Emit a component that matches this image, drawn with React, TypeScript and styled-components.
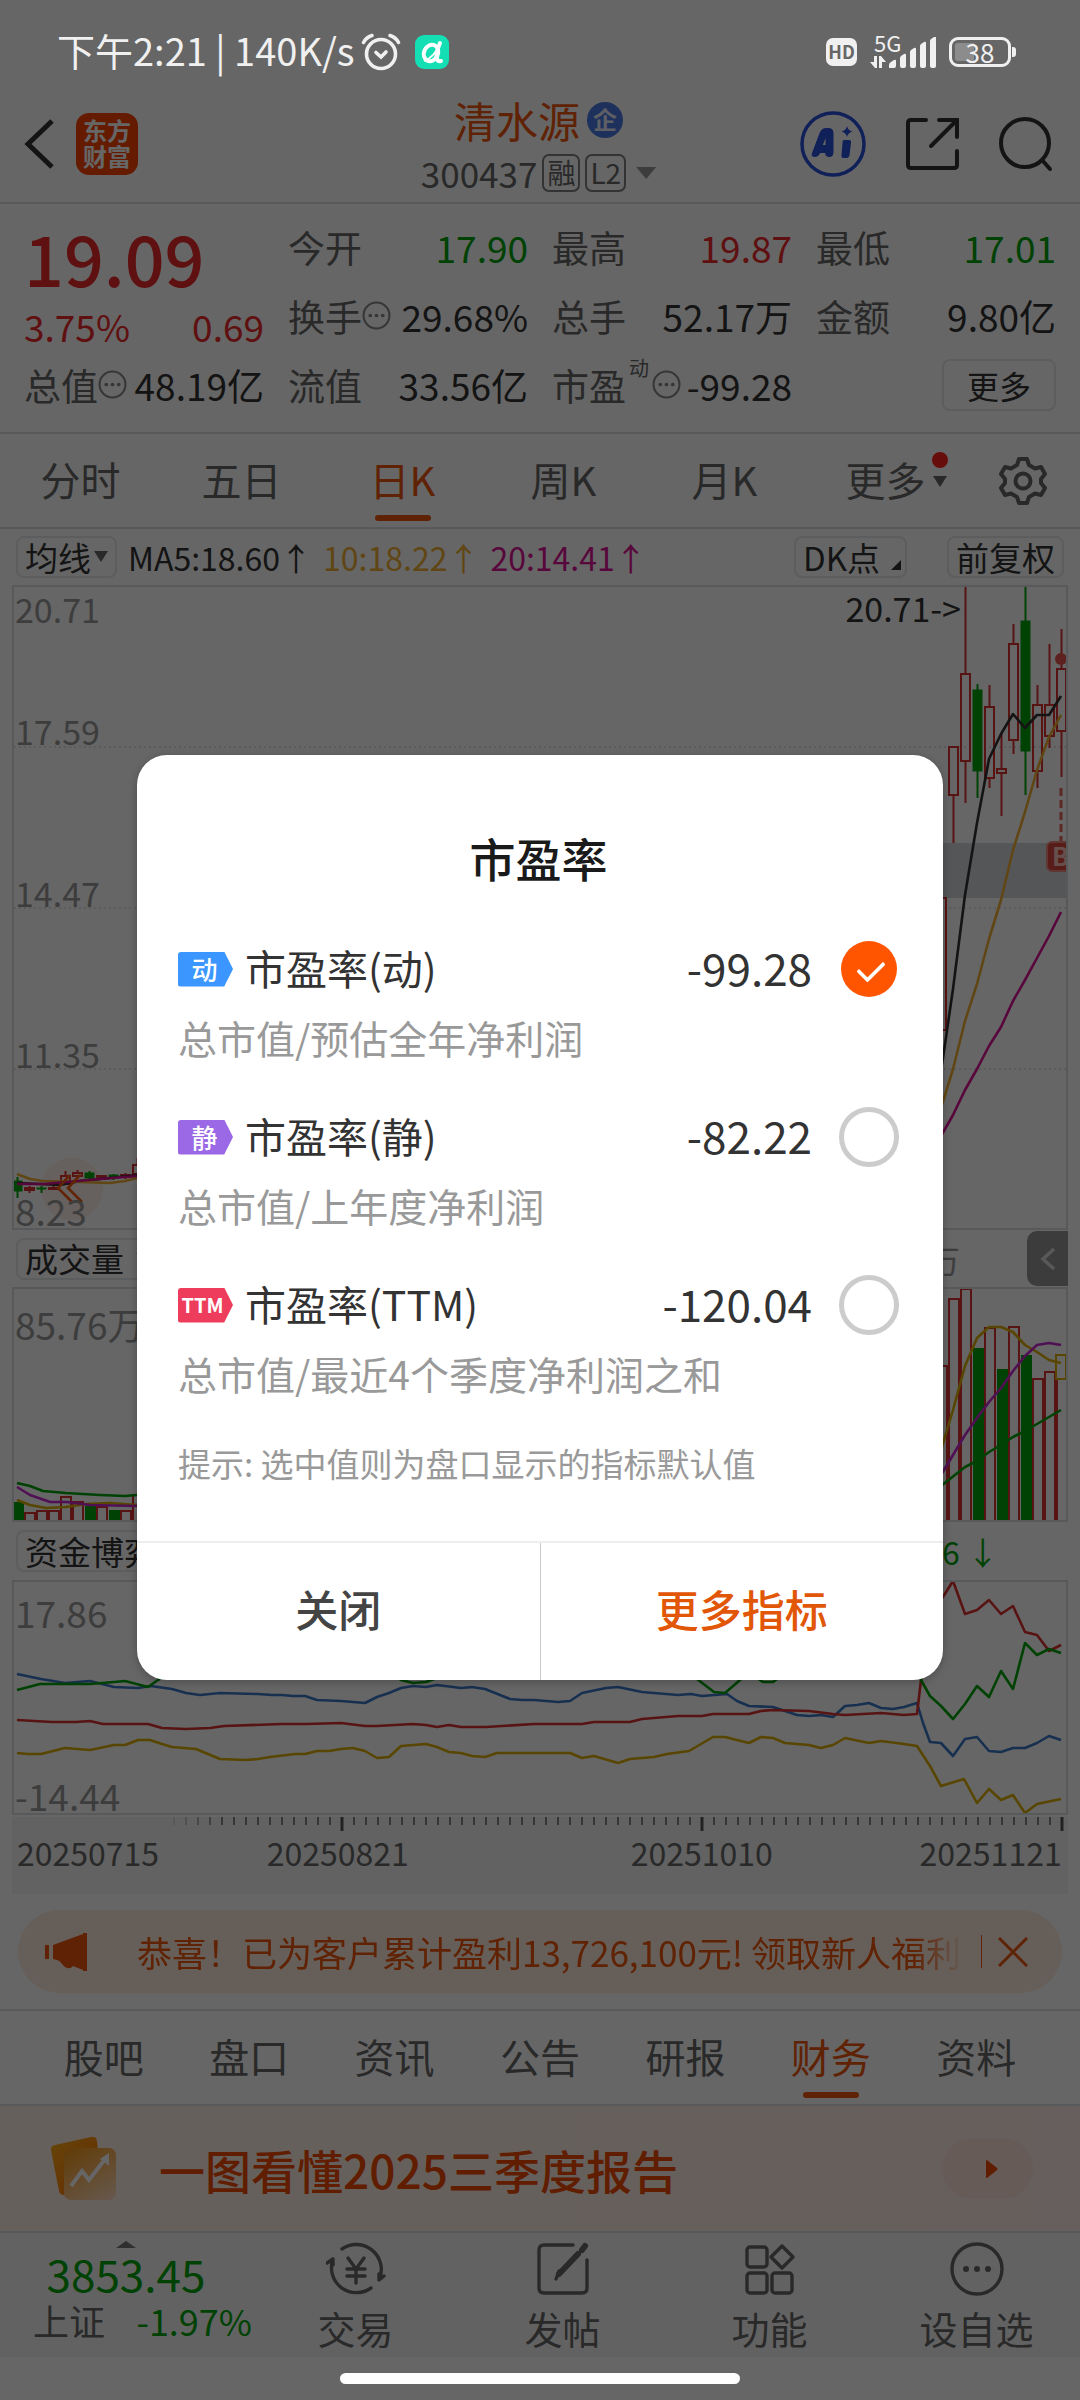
import React, { useState } from 'react';
import styled, { createGlobalStyle, css } from 'styled-components';

const color = {
  up: '#ee2a2a',
  down: '#00a50a',
  brand: '#f0560a',
  ink: '#333333',
  label: '#666666',
  muted: '#999999',
  line: '#dcdfe3',
  frame: '#e6e8ec',
  candle: '#dc3030',
  gold: '#f0b033',
  magenta: '#dc1296',
  purple: '#c828d2',
  blue: '#3c78c8',
  yellow: '#dcae00',
};

const GlobalStyle = createGlobalStyle`
  * { box-sizing: border-box; }
  body {
    margin: 0;
    background: #fff;
    font-family: "Noto Sans CJK SC", "Noto Sans", sans-serif;
    color: ${color.ink};
  }
  button, input {
    font: inherit;
    color: inherit;
    margin: 0;
    padding: 0;
    border: 0;
    background: none;
  }
  svg { display: block; flex: none; }
`;

const Screen = styled.div`
  position: relative;
  min-height: 100vh;
  display: flex;
  flex-direction: column;
  background: #fff;
  overflow: hidden;
`;

/* ---------- status bar ---------- */

const StatusBar = styled.div`
  position: relative;
  z-index: 3;
  display: flex;
  align-items: center;
  justify-content: space-between;
  height: 96px;
  padding: 8px 69px 0 57px;
  color: #f0f0f0;
  font-size: 38px;
  line-height: 48px;
`;

const StatusGroup = styled.div<{ $gap: number }>`
  display: flex;
  align-items: center;
  gap: ${(p) => p.$gap}px;
`;

const StatusTime = styled.span`
  margin: -4px -8px 0 0;
`;

const HdBadge = styled.span`
  width: 31px;
  height: 28px;
  border-radius: 7px;
  background: #f0f0f0;
  color: #666;
  font-size: 18px;
  font-weight: 700;
  line-height: 27px;
  text-align: center;
`;

const Network = styled.div`
  position: relative;
`;

const NetworkType = styled.span`
  position: absolute;
  left: 4px;
  top: -6px;
  font-size: 22px;
  line-height: 22px;
`;

const Battery = styled.span`
  position: relative;
  width: 62px;
  height: 30px;
  border: 3px solid #f0f0f0;
  border-radius: 9px;
  background: linear-gradient(90deg, #8c8c8c 38%, transparent 38%);
  background-origin: content-box;
  background-clip: content-box;
  padding: 3px;
  font-size: 26px;
  line-height: 17px;
  text-align: center;
  &::after {
    content: '';
    position: absolute;
    right: -8px;
    top: 7px;
    width: 4px;
    height: 10px;
    border-radius: 0 3px 3px 0;
    background: #f0f0f0;
  }
`;

/* ---------- header ---------- */

const Header = styled.header`
  display: grid;
  grid-template-columns: 1fr auto 1fr;
  align-items: center;
  height: 108px;
  padding: 0 27px 15px 24px;
  border-bottom: 2px solid ${color.line};
`;

const HeaderSide = styled.div<{ $end?: boolean; $gap: number }>`
  display: flex;
  align-items: center;
  gap: ${(p) => p.$gap}px;
  justify-content: ${(p) => (p.$end ? 'flex-end' : 'flex-start')};
`;

const IconButton = styled.button`
  display: flex;
  cursor: pointer;
`;

const Logo = styled.a`
  display: block;
  width: 62px;
  height: 62px;
  padding-top: 4px;
  border-radius: 13px;
  background: #fa4400;
  color: #fff;
  font-size: 24px;
  font-weight: 700;
  line-height: 26px;
  text-align: center;
  text-decoration: none;
`;

const StockTitle = styled.h1`
  display: flex;
  align-items: center;
  justify-content: center;
  gap: 7px;
  margin: 0 0 10px;
  color: ${color.brand};
  font-size: 42px;
  font-weight: 400;
  line-height: 48px;
`;

const CompanyBadge = styled.span`
  width: 36px;
  height: 36px;
  border-radius: 50%;
  background: #4b7be5;
  color: #e8eefc;
  font-size: 24px;
  font-weight: 700;
  line-height: 34px;
  text-align: center;
`;

const StockCode = styled.div`
  display: flex;
  align-items: center;
  justify-content: center;
  gap: 5px;
  color: ${color.label};
  font-size: 35px;
  line-height: 38px;
`;

const CodeTag = styled.span`
  height: 38px;
  min-width: 36px;
  padding: 0 3px;
  border: 2px solid #808080;
  border-radius: 7px;
  font-size: 28px;
  line-height: 32px;
  text-align: center;
`;

const Triangle = styled.span<{ $w: number; $h: number; $fill: string; $up?: boolean }>`
  flex: none;
  width: ${(p) => p.$w}px;
  height: ${(p) => p.$h}px;
  background: ${(p) => p.$fill};
  clip-path: ${(p) => (p.$up ? 'polygon(50% 0, 100% 100%, 0 100%)' : 'polygon(0 0, 100% 0, 50% 100%)')};
`;

const CodeArrow = styled(Triangle)`
  margin-left: 5px;
`;

/* ---------- quote ---------- */

const Quote = styled.section`
  display: grid;
  grid-template-columns: repeat(4, minmax(0, 1fr));
  grid-template-rows: repeat(3, 69px);
  column-gap: 24px;
  padding: 8px 24px 13px;
  border-bottom: 2px solid ${color.line};
  font-size: 37px;
  line-height: 48px;
`;

const PriceBlock = styled.div`
  grid-row: span 2;
  color: ${color.up};
`;

const Price = styled.div`
  font-size: 70px;
  font-weight: 500;
  line-height: 90px;
`;

const Spread = styled.div`
  display: flex;
  justify-content: space-between;
`;

const Cell = styled.div`
  display: flex;
  align-items: center;
  color: ${color.label};
  white-space: nowrap;
`;

const CellValue = styled.span<{ $color?: string }>`
  margin-left: auto;
  color: ${(p) => p.$color ?? color.ink};
`;

const CellNote = styled.sup`
  align-self: flex-start;
  margin: 8px 3px 0;
  font-size: 20px;
  line-height: 20px;
`;

const OutlineButton = styled.button`
  margin-left: auto;
  width: 114px;
  height: 52px;
  border: 2px solid ${color.frame};
  border-radius: 8px;
  color: ${color.ink};
  font-size: 32px;
  line-height: 44px;
  cursor: pointer;
`;

/* ---------- tabs ---------- */

const TabBar = styled.nav<{ $inset: number }>`
  display: flex;
  height: 95px;
  padding: 0 ${(p) => p.$inset}px;
  border-bottom: 2px solid ${color.line};
`;

const Tab = styled.button<{ $active?: boolean }>`
  position: relative;
  flex: 1;
  padding-bottom: 4px;
  color: ${(p) => (p.$active ? color.brand : color.label)};
  font-size: 40px;
  line-height: 56px;
  cursor: pointer;
  ${(p) =>
    p.$active &&
    css`
      &::after {
        content: '';
        position: absolute;
        left: 50%;
        bottom: 6px;
        width: 56px;
        height: 6px;
        margin-left: -28px;
        border-radius: 3px;
        background: ${color.brand};
      }
    `}
`;

const TabMarks = styled.span`
  position: absolute;
  right: 18px;
  top: 18px;
  display: flex;
  flex-direction: column;
  align-items: center;
  gap: 8px;
`;

const RedDot = styled.i`
  width: 16px;
  height: 16px;
  border-radius: 50%;
  background: #ff2020;
`;

const SettingsButton = styled(IconButton)`
  flex: none;
  width: 114px;
  align-items: center;
  justify-content: center;
`;

/* ---------- chart panel ---------- */

const IndicatorRow = styled.div<{ $h: number }>`
  display: flex;
  align-items: center;
  gap: 11px;
  height: ${(p) => p.$h}px;
  padding: 0 16px;
  font-size: 32px;
  line-height: 38px;
  white-space: nowrap;
`;

const Chip = styled.button<{ $gap?: number }>`
  display: flex;
  align-items: center;
  gap: ${(p) => p.$gap ?? 3}px;
  height: 42px;
  padding: 0 7px 1px;
  border: 2px solid ${color.frame};
  border-radius: 8px;
  color: ${color.ink};
  font-size: 33px;
  line-height: 36px;
  cursor: pointer;
`;

const ChipGroup = styled.div`
  display: flex;
  gap: 40px;
  margin-left: auto;
`;

const Corner = styled.i`
  align-self: flex-end;
  width: 10px;
  height: 10px;
  margin: 0 -3px 5px 8px;
  background: ${color.ink};
  clip-path: polygon(100% 0, 100% 100%, 0 100%);
`;

const Tinted = styled.span<{ $color: string }>`
  color: ${(p) => p.$color};
`;

const CutOff = styled.div<{ $w: number }>`
  display: flex;
  align-items: center;
  gap: 7px;
  width: ${(p) => p.$w}px;
  margin-left: auto;
`;

const PanelToggle = styled.button`
  display: flex;
  align-items: center;
  justify-content: center;
  width: 41px;
  height: 55px;
  margin: 0 -4px 0 auto;
  border-radius: 10px 0 0 10px;
  background: #969696;
  cursor: pointer;
`;

const ChartFrame = styled.div<{ $h: number }>`
  position: relative;
  height: ${(p) => p.$h}px;
  margin: 0 12px;
  outline: 2px solid ${color.line};
  outline-offset: -2px;
  svg {
    width: 100%;
    height: 100%;
  }
`;

const ScaleLabel = styled.span<{ $top: number; $large?: boolean }>`
  position: absolute;
  left: 3px;
  top: ${(p) => p.$top}px;
  color: ${color.muted};
  font-size: ${(p) => (p.$large ? 37 : 34)}px;
  line-height: 40px;
`;

const PeakLabel = styled.span`
  position: absolute;
  right: 107px;
  top: 3px;
  font-size: 34px;
  line-height: 40px;
`;

const Axis = styled.div`
  margin: 2px 12px 16px;
  padding-bottom: 20px;
  background: #f6f6f6;
  svg {
    width: 100%;
  }
`;

const AxisDates = styled.div`
  display: grid;
  grid-template-columns: 249fr 363fr 288fr 142fr;
  padding: 0 6px 0 5px;
  color: ${color.label};
  font-size: 32px;
  line-height: 43px;
`;

/* ---------- notice, banner ---------- */

const Notice = styled.div`
  display: flex;
  align-items: center;
  height: 83px;
  margin: 0 18px 16px;
  padding: 0 34px 0 27px;
  border-radius: 42px;
  background: #ffebdb;
  color: ${color.brand};
`;

const NoticeText = styled.div`
  flex: 1;
  min-width: 0;
  margin: 0 17px 0 50px;
  overflow: hidden;
  white-space: nowrap;
  font-size: 35px;
  line-height: 50px;
  mask-image: linear-gradient(90deg, #000 calc(100% - 50px), transparent);
`;

const NoticeRule = styled.i`
  width: 1px;
  height: 33px;
  margin-right: 16px;
  background: ${color.brand};
`;

const SectionTabs = styled(TabBar)`
  border-top: 2px solid ${color.line};
  height: 97px;
`;

const Banner = styled.a`
  display: flex;
  align-items: center;
  height: 127px;
  padding: 0 47px 0 48px;
  border-bottom: 2px solid ${color.line};
  background: linear-gradient(90deg, #fff0e6, #ffeee8);
  color: #f04a00;
  font-size: 46px;
  font-weight: 500;
  line-height: 60px;
  text-decoration: none;
`;

const BannerText = styled.span`
  margin-left: 40px;
`;

const BannerGo = styled.span`
  display: flex;
  align-items: center;
  justify-content: center;
  width: 91px;
  height: 61px;
  margin-left: auto;
  padding-left: 8px;
  border-radius: 31px;
  background: #ffe3d8;
`;

/* ---------- bottom bar ---------- */

const BottomBar = styled.nav`
  display: flex;
  height: 124px;
  background: #f6f6f6;
  color: ${color.label};
`;

const IndexBlock = styled.button`
  display: flex;
  flex-direction: column;
  align-items: center;
  width: 252px;
  padding-top: 8px;
  cursor: pointer;
`;

const IndexValue = styled.strong`
  color: ${color.down};
  font-size: 44px;
  font-weight: 400;
  line-height: 50px;
`;

const IndexRow = styled.span`
  display: flex;
  justify-content: space-between;
  align-self: stretch;
  padding-left: 33px;
  font-size: 36px;
  line-height: 44px;
`;

const BottomItem = styled.button`
  flex: 1;
  display: flex;
  flex-direction: column;
  align-items: center;
  gap: 10px;
  padding-top: 9px;
  font-size: 38px;
  line-height: 44px;
  cursor: pointer;
`;

const HomeArea = styled.div`
  position: relative;
  z-index: 3;
  display: flex;
  align-items: center;
  justify-content: center;
  height: 43px;
`;

const HomeBar = styled.i`
  width: 37%;
  height: 11px;
  border-radius: 6px;
  background: #fff;
`;

/* ---------- dialog ---------- */

const Scrim = styled.div`
  position: absolute;
  inset: 0;
  z-index: 2;
  display: flex;
  align-items: center;
  justify-content: center;
  padding: 35px 137px 0;
  background: rgba(0, 0, 0, 0.6);
`;

const Dialog = styled.form`
  flex: 1;
  max-width: 806px;
  border-radius: 30px;
  background: #fff;
  overflow: hidden;
  box-shadow: 0 2px 8px rgba(0, 0, 0, 0.25);
`;

const DialogBody = styled.div`
  padding: 72px 44px 55px 41px;
`;

const DialogTitle = styled.h2`
  margin: 0 0 52px;
  color: #1a1a1a;
  font-size: 46px;
  font-weight: 500;
  line-height: 60px;
  text-align: center;
`;

const OptionList = styled.div`
  display: flex;
  flex-direction: column;
  gap: 44px;
`;

const Option = styled.label`
  display: block;
  cursor: pointer;
`;

const OptionHead = styled.span`
  display: flex;
  align-items: center;
  height: 60px;
  margin-bottom: 12px;
  font-size: 41px;
  line-height: 56px;
`;

const OptionTag = styled.span<{ $color: string; $small?: boolean }>`
  width: 55px;
  height: 35px;
  margin-right: 12px;
  padding-right: ${(p) => (p.$small ? 6 : 2)}px;
  border-radius: 3px 0 0 3px;
  background: ${(p) => p.$color};
  clip-path: polygon(0 0, 84% 0, 100% 50%, 84% 100%, 0 100%);
  color: #fff;
  font-size: ${(p) => (p.$small ? 20 : 26)}px;
  font-weight: ${(p) => (p.$small ? 700 : 500)};
  line-height: 34px;
  text-align: center;
`;

const OptionName = styled.span`
  padding-bottom: 4px;
`;

const OptionValue = styled.span`
  margin-left: auto;
  margin-right: 27px;
  padding-bottom: 4px;
  font-size: 44px;
`;

const Radio = styled.input`
  appearance: none;
  position: relative;
  width: 60px;
  height: 60px;
  border: 5px solid #cccccc;
  border-radius: 50%;
  cursor: pointer;
  &:checked {
    border: 2px solid transparent;
    background: #ff5500;
    background-clip: padding-box;
  }
  &:checked::after {
    content: '';
    position: absolute;
    left: 17px;
    top: 19px;
    width: 22px;
    height: 12px;
    border: solid #fff;
    border-width: 0 0 4px 4px;
    border-radius: 2px;
    rotate: -45deg;
  }
`;

const OptionNote = styled.span`
  display: block;
  color: ${color.muted};
  font-size: 39px;
  line-height: 52px;
`;

const Hint = styled.p`
  margin: 41px 0 0;
  color: ${color.muted};
  font-size: 33px;
  line-height: 46px;
`;

const DialogFooter = styled.div`
  display: flex;
  border-top: 2px solid #eeeeee;
`;

const DialogButton = styled.button<{ $primary?: boolean }>`
  flex: 1;
  height: 137px;
  padding-bottom: 7px;
  color: ${(p) => (p.$primary ? '#e25608' : '#444444')};
  font-size: 43px;
  font-weight: 500;
  line-height: 60px;
  cursor: pointer;
  & + & {
    border-left: 1px solid #cccccc;
  }
`;

/* ---------- drawings ---------- */

const InfoIcon = () => (
  <svg width="29" height="29" viewBox="0 0 28 28" fill="#888" aria-hidden="true">
    <circle cx="14" cy="14" r="12.5" fill="none" stroke="#888" strokeWidth="2" />
    <circle cx="8" cy="14" r="1.8" />
    <circle cx="14" cy="14" r="1.8" />
    <circle cx="20" cy="14" r="1.8" />
  </svg>
);

const AlarmIcon = () => (
  <svg width="40" height="38" viewBox="0 0 40 38" fill="none" stroke="#f0f0f0" strokeWidth="3.6" strokeLinecap="round">
    <circle cx="20" cy="21" r="14.5" />
    <path d="M2.5 9.500Q5 4.500 11 2.500M37.500 9.500Q35 4.500 29 2.500M15 19.500l5 4.500 5-5" />
  </svg>
);

const AppIcon = () => (
  <svg width="34" height="34" viewBox="0 0 34 34">
    <rect width="34" height="34" rx="9" fill="#14dfb4" />
    <ellipse cx="16" cy="18" rx="7" ry="8.500" transform="rotate(25 16 18)" fill="none" stroke="#fff" strokeWidth="4" />
    <path d="M25 8Q20 20 22 24q1 3 4 2" fill="none" stroke="#fff" strokeWidth="4" strokeLinecap="round" />
    <path d="M9 26Q20 22 25 8" fill="none" stroke="#fff" strokeWidth="2" />
  </svg>
);

const SignalIcon = () => (
  <svg width="66" height="31" viewBox="0 0 66 31" fill="#f0f0f0">
    <path d="M0 25l4 0v-6h3v12h-2zM9 31V19h2l5 6h-4v6z" />
    <path d="M19 31v-3q0-2 2-3l3-2q2-1 2 1v5q0 2-2 2z" />
    <path d="M30 29V21q0-1 1-2l3-2q2-1 2 1v11q0 2-2 2h-2q-2 0-2-2z" />
    <path d="M40 29V15q0-1 1-2l3-2q2-1 2 1v17q0 2-2 2h-2q-2 0-2-2z" />
    <path d="M50 29V9q0-1 1-2l3-2q2-1 2 1v23q0 2-2 2h-2q-2 0-2-2z" />
    <path d="M60 29V4q0-1 1-2l3-2q2-1 2 1v28q0 2-2 2h-2q-2 0-2-2z" />
  </svg>
);

const BackIcon = () => (
  <svg width="30" height="50" viewBox="0 0 30 50" fill="none" stroke="#333" strokeWidth="5">
    <path d="M28 2L4 25l24 23" />
  </svg>
);

const AiIcon = () => (
  <svg width="66" height="66" viewBox="0 0 66 66">
    <circle cx="33" cy="33" r="31" fill="none" stroke="#2850dc" strokeWidth="3.500" />
    <path
      d="M12.500 42l8-21q1.500-3.500 5-3.500h3.500q4 0 4 4v20q0 4-3 4h-1.500q-3 0-3-4h-5.500q-1.500 4-4.500 4h-1q-3.500 0-2-3.500zM22 34.500h4V25z"
      fill="#2850dc"
      stroke="#2850dc"
      strokeWidth="1"
      fillRule="evenodd"
    />
    <path d="M44 29h5q2.500 0 2 3l-1.500 12q-.5 3-3 3h-3q-2.500 0-2-3l1-12q0-3 1.500-3z" fill="#2850dc" />
    <path d="M47 15q1 4.500 5.500 5.500-4.500 1-5.500 5.500-1-4.500-5.500-5.500 4.500-1 5.500-5.500z" fill="#2850dc" />
  </svg>
);

const ShareIcon = () => (
  <svg width="53" height="54" viewBox="0 0 53 54" fill="none" stroke="#333" strokeWidth="4" strokeLinecap="round">
    <path d="M20 3H5Q2 3 2 6v42q0 3 3 3h43q3 0 3-3V34M33 3h18v17M50 4L25 29" />
  </svg>
);

const SearchIcon = () => (
  <svg width="54" height="56" viewBox="0 0 54 56" fill="none" stroke="#333" strokeWidth="4" strokeLinecap="round">
    <circle cx="26" cy="27" r="24" />
    <path d="M43 44l8 9" />
  </svg>
);

const GearIcon = () => (
  <svg width="50" height="50" viewBox="0 0 50 50" fill="none" stroke="#666" strokeWidth="4" strokeLinejoin="round">
    <path d="M21 3h8l2 6 6 3.500 6-1.500 4 7-4 5v4l4 5-4 7-6-1.500-6 3.500-2 6h-8l-2-6-6-3.500-6 1.500-4-7 4-5v-4l-4-5 4-7 6 1.500 6-3.500z" />
    <circle cx="25" cy="25" r="7.500" />
  </svg>
);

const HornIcon = () => (
  <svg width="42" height="38" viewBox="0 0 42 38" fill={color.brand}>
    <rect x="0" y="12" width="4" height="14" />
    <path d="M8 12L38 1v-1h4v38h-4v-1l-10-4q-3 4-8 1l-3-3q-2-4-9-5z" />
  </svg>
);

const CloseIcon = () => (
  <svg width="30" height="30" viewBox="0 0 30 30" fill="none" stroke={color.brand} strokeWidth="3">
    <path d="M1 1l28 28M29 1L1 29" />
  </svg>
);

const ReportIcon = () => (
  <svg width="71" height="66" viewBox="0 0 71 66">
    <defs>
      <linearGradient id="sheetBack" x1="0" y1="0" x2="1" y2="1">
        <stop offset="0" stopColor="#ffae1a" />
        <stop offset="1" stopColor="#ff6a00" />
      </linearGradient>
      <linearGradient id="sheetFront" x1="0.200" y1="0" x2="0.800" y2="1">
        <stop offset="0" stopColor="#f59a1c" />
        <stop offset="1" stopColor="#ffd9b8" />
      </linearGradient>
    </defs>
    <path d="M7 9L43 1q5-1 6 4l4 46-37 8q-4 0-5-4L3 14q-1-4 4-5z" fill="url(#sheetBack)" />
    <rect x="16" y="12" width="52" height="52" rx="7" fill="url(#sheetFront)" />
    <path d="M23 50l11-15 7 9 17-22" fill="none" stroke="#fff" strokeWidth="4" />
    <path d="M52 23l9-6v13z" fill="#fff" />
  </svg>
);

const navStroke = { fill: 'none', stroke: '#666', strokeWidth: 3.4, strokeLinecap: 'round', strokeLinejoin: 'round' } as const;

const TradeIcon = () => (
  <svg width="60" height="54" viewBox="0 0 60 54" {...navStroke}>
    <path d="M16 7A25 25 0 0 1 53 38l5-4M53 38V32M45 46A25 25 0 0 1 7 17l-6 4M7 17v6" />
    <path d="M22 16l8 11 8-11M30 27v14M21 27h18M21 34h18" />
  </svg>
);

const PostIcon = () => (
  <svg width="54" height="54" viewBox="0 0 54 54" {...navStroke}>
    <path d="M37 3H8Q3 3 3 8v38q0 5 5 5h38q5 0 5-5V18" />
    <path d="M49 4L46 8M42 12L23 32" strokeWidth="6" />
    <path d="M20 37l3-8" />
  </svg>
);

const FeatureIcon = () => (
  <svg width="54" height="54" viewBox="0 0 54 54" {...navStroke}>
    <rect x="4" y="5" width="20" height="20" rx="3" />
    <rect x="4" y="31" width="20" height="20" rx="3" />
    <rect x="29" y="31" width="20" height="20" rx="3" />
    <path d="M39 4l11 11-11 11-11-11z" />
  </svg>
);

const MoreIcon = () => (
  <svg width="54" height="54" viewBox="0 0 54 54" {...navStroke}>
    <circle cx="27" cy="27" r="25" />
    <g fill="#666" stroke="none">
      <circle cx="16" cy="27" r="3" />
      <circle cx="27" cy="27" r="3" />
      <circle cx="38" cy="27" r="3" />
    </g>
  </svg>
);

/* ---------- chart data ---------- */

type Candle = { x: number; w: number; top: number; bottom: number; high: number; low: number; down?: boolean };

const candles: Candle[] = [
  { x: 13, w: 9, top: 1181, bottom: 1191, high: 1177, low: 1198, down: true },
  { x: 25, w: 9, top: 1188, bottom: 1190, high: 1186, low: 1193 },
  { x: 37, w: 9, top: 1188, bottom: 1189, high: 1186, low: 1193, down: true },
  { x: 49, w: 9, top: 1188, bottom: 1189, high: 1186, low: 1190 },
  { x: 61, w: 9, top: 1176, bottom: 1184, high: 1171, low: 1184 },
  { x: 73, w: 9, top: 1173, bottom: 1176, high: 1170, low: 1178 },
  { x: 85, w: 9, top: 1173, bottom: 1178, high: 1171, low: 1180, down: true },
  { x: 97, w: 9, top: 1176, bottom: 1178, high: 1175, low: 1180 },
  { x: 109, w: 9, top: 1175, bottom: 1178, high: 1174, low: 1180, down: true },
  { x: 121, w: 9, top: 1175, bottom: 1177, high: 1173, low: 1179 },
  { x: 133, w: 9, top: 1165, bottom: 1174, high: 1158, low: 1176 },
  { x: 937, w: 9, top: 898, bottom: 1030, high: 898, low: 1030 },
  { x: 949, w: 9, top: 747, bottom: 795, high: 747, low: 843 },
  { x: 961, w: 9, top: 674, bottom: 761, high: 586, low: 803 },
  { x: 973, w: 9, top: 690, bottom: 771, high: 684, low: 798, down: true },
  { x: 985, w: 9, top: 707, bottom: 778, high: 685, low: 788 },
  { x: 997, w: 9, top: 769, bottom: 773, high: 733, low: 816 },
  { x: 1009, w: 9, top: 644, bottom: 740, high: 624, low: 754 },
  { x: 1021, w: 9, top: 621, bottom: 751, high: 586, low: 795, down: true },
  { x: 1033, w: 9, top: 705, bottom: 771, high: 685, low: 788 },
  { x: 1045, w: 9, top: 705, bottom: 736, high: 644, low: 748 },
  { x: 1057, w: 9, top: 669, bottom: 731, high: 629, low: 777 },
];

type Bar = { x: number; top: number; down?: boolean };

const bars: Bar[] = [
  { x: 12, top: 1502, down: true },
  { x: 24, top: 1513 },
  { x: 36, top: 1511 },
  { x: 48, top: 1511 },
  { x: 60, top: 1497 },
  { x: 72, top: 1502 },
  { x: 84, top: 1506, down: true },
  { x: 96, top: 1507 },
  { x: 108, top: 1510, down: true },
  { x: 120, top: 1511 },
  { x: 132, top: 1495 },
  { x: 936, top: 1366 },
  { x: 948, top: 1299 },
  { x: 960, top: 1289 },
  { x: 972, top: 1348, down: true },
  { x: 984, top: 1328 },
  { x: 996, top: 1369, down: true },
  { x: 1008, top: 1327 },
  { x: 1020, top: 1355, down: true },
  { x: 1032, top: 1379 },
  { x: 1044, top: 1372 },
  { x: 1056, top: 1379 },
];

const maLines = [
  { stroke: color.ink, points: '17,1183 40,1184 60,1185 80,1181 110,1178 137,1175' },
  { stroke: color.gold, points: '17,1174 30,1179 43,1181 80,1182 110,1183 125,1181 137,1178' },
  { stroke: color.magenta, points: '17,1184 43,1184 67,1182 100,1179 137,1176' },
  { stroke: color.ink, points: '941,1070 943,1058 953,989 965,895 977,823 989,759 1001,734 1013,714 1025,728 1037,715 1049,715 1061,696' },
  { stroke: color.gold, points: '941,1108 953,1069 965,1021 977,984 989,939 1001,900 1013,850 1025,812 1037,770 1049,737 1061,715' },
  { stroke: color.magenta, points: '941,1136 953,1115 965,1090 977,1069 989,1046 1001,1027 1013,1001 1025,980 1037,958 1049,936 1061,912' },
];

const volumeLines = [
  { stroke: color.yellow, points: '17,1500 30,1505 46,1508 66,1507 86,1504 110,1503 137,1505' },
  { stroke: color.purple, points: '17,1487 30,1495 50,1502 67,1502 90,1505 137,1506' },
  { stroke: color.down, points: '17,1483 30,1486 43,1491 66,1493 100,1495 125,1496 137,1495' },
  { stroke: color.yellow, points: '941,1450 953,1410 965,1366 977,1338 989,1327 1001,1327 1013,1332 1025,1345 1037,1352 1049,1360 1061,1363' },
  { stroke: color.purple, points: '941,1475 953,1455 965,1435 977,1418 989,1402 1001,1388 1013,1371 1025,1356 1037,1345 1049,1343 1061,1345' },
  { stroke: color.down, points: '941,1486 965,1467 977,1461 989,1452 1001,1445 1013,1437 1025,1431 1037,1424 1049,1417 1061,1410' },
];

const flowLines = [
  {
    stroke: color.blue,
    points:
      '17,1674 41,1679 65,1683 90,1681 114,1687 138,1688 151,1686 172,1689 186,1693 200,1695 220,1693 258,1694 272,1695 282,1695 293,1696 305,1696 317,1700 341,1701 365,1703 377,1697 389,1693 401,1688 413,1686 426,1687 437,1685 461,1688 472,1687 485,1689 510,1699 522,1700 534,1700 558,1702 570,1701 582,1693 606,1688 618,1687 642,1692 678,1695 691,1694 702,1696 727,1694 737,1701 749,1706 773,1707 785,1711 797,1715 809,1716 821,1715 833,1717 845,1706 857,1705 869,1703 881,1708 893,1709 904,1707 917,1703 923,1723 930,1742 941,1743 953,1756 965,1739 977,1737 989,1751 1001,1752 1013,1748 1025,1748 1037,1743 1049,1736 1061,1740',
  },
  {
    stroke: color.candle,
    points:
      '17,1720 52,1722 76,1722 90,1721 103,1724 148,1724 162,1728 186,1729 210,1728 224,1726 282,1724 306,1724 341,1723 365,1726 377,1726 413,1724 426,1725 437,1727 449,1725 461,1727 486,1727 534,1724 582,1724 594,1722 630,1722 642,1719 678,1716 702,1716 713,1714 749,1714 761,1711 773,1710 809,1711 833,1714 845,1715 881,1713 904,1715 917,1714 921,1680 930,1640 941,1600 953,1581 965,1614 977,1610 989,1600 1001,1614 1013,1606 1025,1632 1037,1635 1049,1651 1061,1645',
  },
  {
    stroke: color.down,
    points:
      '17,1690 40,1684 90,1684 114,1682 125,1681 148,1687 158,1680 180,1668 300,1660 395,1674 401,1680 413,1683 426,1682 437,1678 520,1660 660,1660 697,1679 714,1692 725,1693 740,1680 750,1674 760,1680 763,1682 773,1682 777,1679 820,1660 905,1660 921,1680 930,1696 941,1706 953,1719 965,1704 977,1686 989,1697 1001,1671 1013,1689 1025,1643 1037,1655 1049,1649 1061,1653',
  },
  {
    stroke: color.yellow,
    points:
      '17,1753 28,1754 41,1754 65,1748 90,1750 114,1745 125,1745 138,1740 150,1740 162,1744 172,1747 196,1749 220,1759 246,1760 258,1759 270,1757 295,1754 305,1754 317,1751 329,1751 341,1749 353,1748 365,1751 377,1758 389,1757 401,1746 426,1744 437,1747 449,1752 461,1753 472,1756 485,1757 497,1753 570,1753 582,1758 594,1756 618,1763 630,1759 654,1757 667,1754 689,1751 713,1737 725,1737 737,1740 749,1743 761,1737 773,1738 785,1743 809,1745 821,1748 833,1745 845,1738 869,1743 881,1741 904,1744 917,1746 930,1766 941,1786 964,1779 977,1803 989,1789 1001,1800 1013,1795 1025,1813 1037,1804 1061,1799',
  },
];

type Line = { stroke: string; points: string };

const Polylines = ({ lines }: { lines: Line[] }) => (
  <>
    {lines.map((l) => (
      <polyline key={l.stroke + l.points.slice(0, 8)} points={l.points} fill="none" stroke={l.stroke} strokeWidth="2.600" strokeLinejoin="round" />
    ))}
  </>
);

const CandleChart = () => (
  <svg viewBox="12 585 1056 645" preserveAspectRatio="none" role="img" aria-label="日K线">
    {[747, 908, 1069].map((y) => (
      <line key={y} x1="14" x2="1066" y1={y} y2={y} stroke="#c8c8c8" strokeWidth="1" strokeDasharray="2 3" />
    ))}
    <rect x="780" y="843" width="287" height="55" fill="#d2d7db" />
    <circle cx="72" cy="1189" r="31" fill="#ff5500" fillOpacity="0.080" />
    {candles.map((c) => {
      const mid = c.x + c.w / 2;
      const tone = c.down ? color.down : color.candle;
      return (
        <g key={c.x} stroke={tone} strokeWidth="2">
          <line x1={mid} x2={mid} y1={c.high} y2={c.top} />
          <line x1={mid} x2={mid} y1={c.bottom} y2={c.low} />
          <rect x={c.x} y={c.top} width={c.w} height={c.bottom - c.top} fill={c.down ? tone : 'none'} strokeWidth={c.down ? 1 : 2} />
        </g>
      );
    })}
    <Polylines lines={maLines} />
    <path d="M70 1175L58 1188l14 14M80 1175L68 1188l14 14" fill="none" stroke="#f25a0c" strokeWidth="2.600" />
    <circle cx="1061" cy="659" r="6" fill="#e8564b" />
    <line x1="1061" x2="1061" y1="788" y2="841" stroke="#e8665b" strokeWidth="3" strokeDasharray="8 4" />
    <rect x="1047" y="842" width="30" height="29" rx="5" fill="#dc4a40" stroke="#f08a80" strokeWidth="2" />
    <text x="1052" y="866" fill="#ffc8c0" fontSize="25" fontWeight="700">
      B
    </text>
  </svg>
);

const VolumeChart = () => (
  <svg viewBox="12 1287 1056 235" preserveAspectRatio="none" role="img" aria-label="成交量">
    {bars.map((b) => (
      <rect
        key={b.x}
        x={b.x + 1}
        y={b.top}
        width={b.down ? 11 : 10}
        height={1521 - b.top}
        fill={b.down ? color.down : 'none'}
        stroke={b.down ? 'none' : color.candle}
        strokeWidth="2"
      />
    ))}
    <rect x="1056" y="1355" width="10" height="24" fill="none" stroke={color.yellow} strokeWidth="2" />
    <Polylines lines={volumeLines} />
  </svg>
);

const FlowChart = () => (
  <svg viewBox="12 1580 1056 235" preserveAspectRatio="none" role="img" aria-label="资金博弈">
    <Polylines lines={flowLines} />
  </svg>
);

const AxisTicks = () => (
  <svg viewBox="12 0 1056 14" height="14" preserveAspectRatio="none" aria-hidden="true">
    {Array.from({ length: 75 }, (_, i) => {
      const x = 174 + i * 12;
      const major = (x - 342) % 360 === 0;
      return (
        <line key={x} x1={x} x2={x} y1="0" y2={major ? 14 : 8} stroke={major ? '#555' : '#888'} strokeWidth={major ? 3 : 2} strokeOpacity={Math.min(1, 0.2 + i * 0.2)} />
      );
    })}
  </svg>
);

/* ---------- page ---------- */

const periods = ['分时', '五日', '日K', '周K', '月K'];
const sections = ['股吧', '盘口', '资讯', '公告', '研报', '财务', '资料'];

const options = [
  { id: 'dynamic', tag: '动', tone: '#3b96ff', name: '市盈率(动)', value: '-99.28', note: '总市值/预估全年净利润' },
  { id: 'static', tag: '静', tone: '#9b69e6', name: '市盈率(静)', value: '-82.22', note: '总市值/上年度净利润' },
  { id: 'ttm', tag: 'TTM', tone: '#ee3d5c', name: '市盈率(TTM)', value: '-120.04', note: '总市值/最近4个季度净利润之和' },
];

const bottomItems = [
  { name: '交易', icon: <TradeIcon /> },
  { name: '发帖', icon: <PostIcon /> },
  { name: '功能', icon: <FeatureIcon /> },
  { name: '设自选', icon: <MoreIcon /> },
];

export default function App() {
  const [ratio, setRatio] = useState('dynamic');

  return (
    <Screen>
      <GlobalStyle />

      <StatusBar>
        <StatusGroup $gap={14}>
          <StatusTime>下午2:21 | 140K/s</StatusTime>
          <AlarmIcon />
          <AppIcon />
        </StatusGroup>
        <StatusGroup $gap={13}>
          <HdBadge>HD</HdBadge>
          <Network>
            <NetworkType>5G</NetworkType>
            <SignalIcon />
          </Network>
          <Battery>38</Battery>
        </StatusGroup>
      </StatusBar>

      <Header>
        <HeaderSide $gap={22}>
          <IconButton type="button" aria-label="返回">
            <BackIcon />
          </IconButton>
          <Logo href="#home">东方财富</Logo>
        </HeaderSide>
        <div>
          <StockTitle>
            清水源<CompanyBadge>企</CompanyBadge>
          </StockTitle>
          <StockCode>
            300437
            <CodeTag>融</CodeTag>
            <CodeTag>L2</CodeTag>
            <CodeArrow $w={20} $h={12} $fill="#999" />
          </StockCode>
        </div>
        <HeaderSide $end $gap={40}>
          <IconButton type="button" aria-label="智能助手">
            <AiIcon />
          </IconButton>
          <IconButton type="button" aria-label="分享">
            <ShareIcon />
          </IconButton>
          <IconButton type="button" aria-label="搜索">
            <SearchIcon />
          </IconButton>
        </HeaderSide>
      </Header>

      <Quote>
        <PriceBlock>
          <Price>19.09</Price>
          <Spread>
            <span>3.75%</span>
            <span>0.69</span>
          </Spread>
        </PriceBlock>
        <Cell>
          今开<CellValue $color={color.down}>17.90</CellValue>
        </Cell>
        <Cell>
          最高<CellValue $color={color.up}>19.87</CellValue>
        </Cell>
        <Cell>
          最低<CellValue $color={color.down}>17.01</CellValue>
        </Cell>
        <Cell>
          换手
          <InfoIcon />
          <CellValue>29.68%</CellValue>
        </Cell>
        <Cell>
          总手<CellValue>52.17万</CellValue>
        </Cell>
        <Cell>
          金额<CellValue>9.80亿</CellValue>
        </Cell>
        <Cell>
          总值
          <InfoIcon />
          <CellValue>48.19亿</CellValue>
        </Cell>
        <Cell>
          流值<CellValue>33.56亿</CellValue>
        </Cell>
        <Cell>
          市盈<CellNote>动</CellNote>
          <InfoIcon />
          <CellValue>-99.28</CellValue>
        </Cell>
        <Cell>
          <OutlineButton type="button">更多</OutlineButton>
        </Cell>
      </Quote>

      <TabBar $inset={0}>
        {periods.map((p) => (
          <Tab key={p} type="button" $active={p === '日K'}>
            {p}
          </Tab>
        ))}
        <Tab type="button">
          更多
          <TabMarks>
            <RedDot />
            <Triangle $w={14} $h={11} $fill="#666" />
          </TabMarks>
        </Tab>
        <SettingsButton type="button" aria-label="设置">
          <GearIcon />
        </SettingsButton>
      </TabBar>

      <IndicatorRow $h={56}>
        <Chip type="button">
          均线
          <Triangle $w={14} $h={11} $fill="#666" />
        </Chip>
        <span>MA5:18.60↑</span>
        <Tinted $color={color.gold}>10:18.22↑</Tinted>
        <Tinted $color={color.magenta}>20:14.41↑</Tinted>
        <ChipGroup>
          <Chip type="button">
            DK点
            <Corner />
          </Chip>
          <Chip type="button">前复权</Chip>
        </ChipGroup>
      </IndicatorRow>

      <ChartFrame $h={645}>
        <CandleChart />
        <ScaleLabel $top={4}>20.71</ScaleLabel>
        <ScaleLabel $top={126}>17.59</ScaleLabel>
        <ScaleLabel $top={288}>14.47</ScaleLabel>
        <ScaleLabel $top={449}>11.35</ScaleLabel>
        <ScaleLabel $top={605} $large>
          8.23
        </ScaleLabel>
        <PeakLabel>20.71-&gt;</PeakLabel>
      </ChartFrame>

      <IndicatorRow $h={57}>
        <Chip type="button" $gap={12}>
          成交量
          <Triangle $w={14} $h={11} $fill="#666" />
        </Chip>
        <CutOff $w={136}>
          <Tinted $color={color.muted}>万</Tinted>
          <PanelToggle type="button" aria-label="展开侧栏">
            <svg width="16" height="22" viewBox="0 0 16 22" fill="none" stroke="#ddd" strokeWidth="3.500">
              <path d="M14 1L3 11l11 10" />
            </svg>
          </PanelToggle>
        </CutOff>
      </IndicatorRow>

      <ChartFrame $h={235}>
        <VolumeChart />
        <ScaleLabel $top={17} $large>
          85.76万
        </ScaleLabel>
      </ChartFrame>

      <IndicatorRow $h={58}>
        <Chip type="button" $gap={12}>
          资金博弈
          <Triangle $w={14} $h={11} $fill="#666" />
        </Chip>
        <CutOff $w={122}>
          <Tinted $color={color.down}>6</Tinted>
          <Tinted $color={color.down}>↓</Tinted>
        </CutOff>
      </IndicatorRow>

      <ChartFrame $h={235}>
        <FlowChart />
        <ScaleLabel $top={12} $large>
          17.86
        </ScaleLabel>
        <ScaleLabel $top={195} $large>
          -14.44
        </ScaleLabel>
      </ChartFrame>

      <Axis>
        <AxisTicks />
        <AxisDates>
          <span>20250715</span>
          <span>20250821</span>
          <span>20251010</span>
          <span>20251121</span>
        </AxisDates>
      </Axis>

      <Notice>
        <HornIcon />
        <NoticeText>恭喜！已为客户累计盈利13,726,100元! 领取新人福利!</NoticeText>
        <NoticeRule />
        <IconButton type="button" aria-label="关闭通知">
          <CloseIcon />
        </IconButton>
      </Notice>

      <SectionTabs $inset={31}>
        {sections.map((s) => (
          <Tab key={s} type="button" $active={s === '财务'}>
            {s}
          </Tab>
        ))}
      </SectionTabs>

      <Banner href="#report">
        <ReportIcon />
        <BannerText>一图看懂2025三季度报告</BannerText>
        <BannerGo>
          <svg width="12" height="18" viewBox="0 0 12 18" fill="#f04a00">
            <path d="M0 1q0-1 1-1l10 8q1 1 0 2L1 18q-1 0-1-1z" />
          </svg>
        </BannerGo>
      </Banner>

      <BottomBar>
        <IndexBlock type="button">
          <Triangle $w={20} $h={7} $fill="#777" $up />
          <IndexValue>3853.45</IndexValue>
          <IndexRow>
            上证<Tinted $color={color.down}>-1.97%</Tinted>
          </IndexRow>
        </IndexBlock>
        {bottomItems.map((b) => (
          <BottomItem key={b.name} type="button">
            {b.icon}
            {b.name}
          </BottomItem>
        ))}
      </BottomBar>

      <HomeArea>
        <HomeBar />
      </HomeArea>

      <Scrim>
        <Dialog role="dialog" aria-labelledby="ratio-title" onSubmit={(e) => e.preventDefault()}>
          <DialogBody>
            <DialogTitle id="ratio-title">市盈率</DialogTitle>
            <OptionList>
              {options.map((o) => (
                <Option key={o.id} htmlFor={o.id}>
                  <OptionHead>
                    <OptionTag $color={o.tone} $small={o.tag.length > 1}>
                      {o.tag}
                    </OptionTag>
                    <OptionName>{o.name}</OptionName>
                    <OptionValue>{o.value}</OptionValue>
                    <Radio type="radio" name="ratio" id={o.id} checked={ratio === o.id} onChange={() => setRatio(o.id)} />
                  </OptionHead>
                  <OptionNote>{o.note}</OptionNote>
                </Option>
              ))}
            </OptionList>
            <Hint>提示: 选中值则为盘口显示的指标默认值</Hint>
          </DialogBody>
          <DialogFooter>
            <DialogButton type="button">关闭</DialogButton>
            <DialogButton type="button" $primary>
              更多指标
            </DialogButton>
          </DialogFooter>
        </Dialog>
      </Scrim>
    </Screen>
  );
}
